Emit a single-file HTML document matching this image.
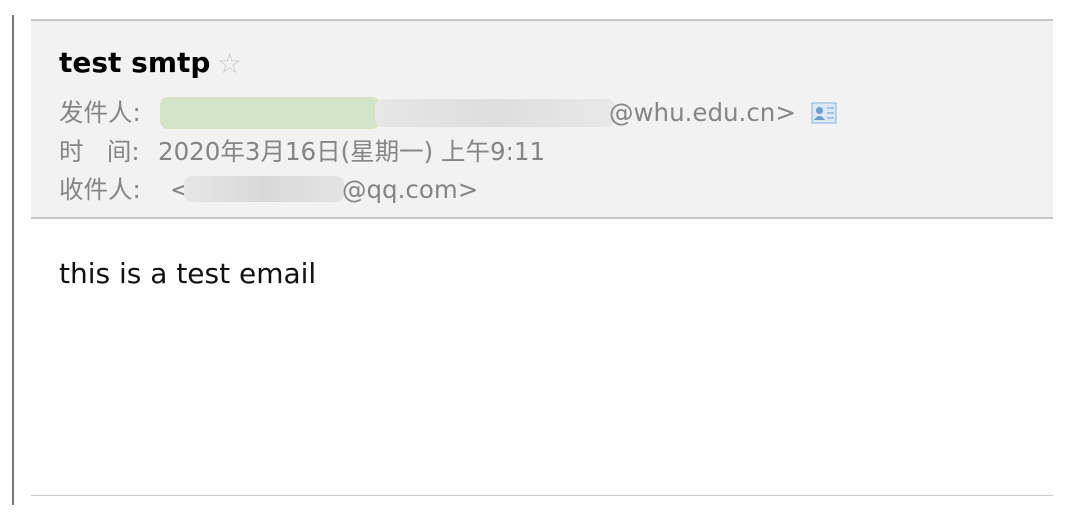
<!DOCTYPE html>
<html><head><meta charset="utf-8"><style>
body{margin:0;width:1088px;height:518px;background:#fff;position:relative;overflow:hidden;font-family:"DejaVu Sans","Noto Sans CJK SC",sans-serif}
.vl{position:absolute;left:12px;top:15px;width:2px;height:490px;background:#777}
.hd{position:absolute;left:31px;top:19px;width:1022px;height:196px;background:#f2f2f2;border-top:2px solid #c8c8c8;border-bottom:2px solid #c8c8c8}
.t{position:absolute;left:59px;top:47px;font-size:28px;line-height:32px;font-weight:bold;color:#000}
.star{position:absolute;left:217px;top:48px;font-size:28px;line-height:32px;color:#ccc}
.r{position:absolute;left:59px;font-size:24.5px;line-height:30px;color:#858585;white-space:nowrap}
.b{position:absolute;border-radius:8px}
.body{position:absolute;left:59px;top:258px;font-size:28px;line-height:32px;color:#111}
.bl{position:absolute;left:31px;top:495px;width:1022px;height:1px;background:#ccc}
</style></head><body>
<div class="vl"></div>
<div class="hd"></div>
<div class="t">test smtp</div>
<div class="star">☆</div>
<div class="r" style="top:98px">发件人:</div>
<div class="b" style="left:160px;top:97px;width:220px;height:32px;background:#d3e5c6"></div>
<div class="b" style="left:375px;top:99px;width:240px;height:28px;background:linear-gradient(90deg,#e6e6e6,#dedede,#e8e8e8)"></div>
<div class="r" style="left:609px;top:98px">@whu.edu.cn&gt;</div>
<svg style="position:absolute;left:811px;top:102px" width="26" height="22"><rect x="1" y="1" width="24" height="20" fill="#dbe8f5" stroke="#8fb3d9"/><circle cx="8.5" cy="8.5" r="3.5" fill="#6f9ccc"/><path d="M3 18 Q8.5 10 14 18Z" fill="#6f9ccc"/><path d="M16 6h7M16 11h7M16 16h7" stroke="#6f9ccc"/></svg>
<div class="r" style="top:137px">时&nbsp;&nbsp;&nbsp;间:&nbsp;<span style="position:absolute;left:99px">2020年3月16日(星期一) 上午9:11</span></div>
<div class="r" style="top:175px">收件人:<span style="position:absolute;left:111px">&lt;</span></div>
<div class="b" style="left:184px;top:176px;width:160px;height:26px;background:linear-gradient(90deg,#e6e6e6,#d8d8d8,#e4e4e4)"></div>
<div class="r" style="left:342px;top:175px">@qq.com&gt;</div>
<div class="body">this is a test email</div>
<div class="bl"></div>
</body></html>
